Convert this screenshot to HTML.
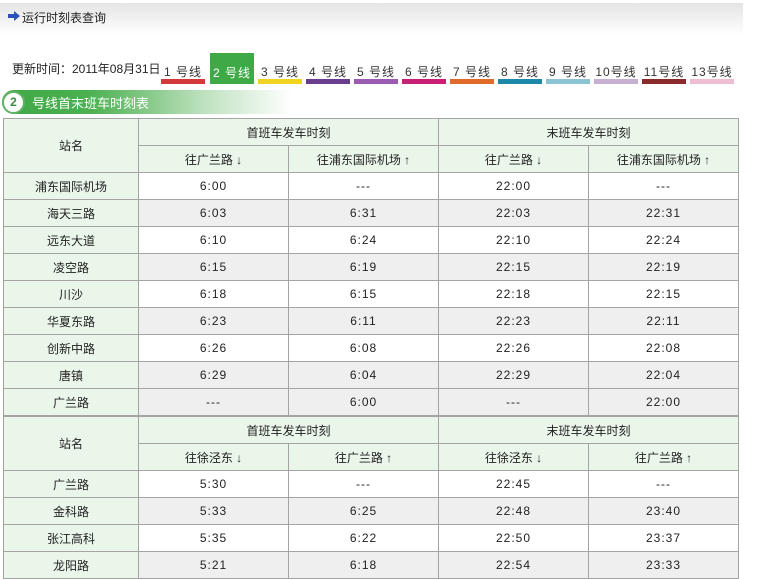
<!DOCTYPE html>
<html><head><meta charset="utf-8"><style>
*{margin:0;padding:0;box-sizing:border-box}
html,body{width:761px;height:580px;overflow:hidden}
body{background:#fff;font-family:"Liberation Sans","Noto Sans CJK SC",sans-serif;font-size:12px;color:#222;position:relative}
.top{position:absolute;left:0;top:3px;width:743px;height:32px;background:linear-gradient(#e4e4e4,#fff)}
.title{position:absolute;left:22px;top:9px;font-size:12px}
.arrow{position:absolute;left:8px;top:11px;width:12px;height:10px}
.upd{position:absolute;left:12px;top:60px;font-size:12px}
.tab{position:absolute;top:60px;width:44px;height:24px;text-align:center;font-size:12px;color:#333}
.tab span{display:block;padding-top:3px;letter-spacing:1px}
.tab i{position:absolute;left:0;bottom:0;width:44px;height:5px}
.banner{position:absolute;left:2px;top:90px;width:290px;height:24px;border-radius:12px 0 0 12px;background:linear-gradient(90deg,#3ea845 0,#4cb050 30%,#bfe2c0 70%,#fff 100%)}
.circ{position:absolute;left:2px;top:91px;width:23px;height:23px;border-radius:50%;background:#fff;border:2px solid #62b266;color:#3d8a3f;font-weight:bold;font-size:12px;text-align:center;line-height:19px}
.btxt{position:absolute;left:32px;top:93px;color:#fff;font-size:13px}
.g{position:absolute;left:3px;width:736px;display:grid;grid-template-columns:134px 149px 149px 149px 149px;grid-auto-rows:26px;gap:1px;padding:1px;background:#a4a4a4}
.g div{display:flex;align-items:center;justify-content:center;background:#fff;font-size:12px}
.g .h{background:#eaf6ea}
.g .s{background:#eaf6ea}
.g .gr{background:#efefef}
.r2{grid-row:span 2}.c2{grid-column:span 2}
.n{letter-spacing:1px}
</style></head><body>
<div class="top"></div>
<svg class="arrow" viewBox="0 0 12 10"><path d="M0 3h6V0l6 5-6 5V7H0z" fill="#2b4fb8"/></svg>
<div class="title">运行时刻表查询</div>
<div class="upd">更新时间：2011年08月31日</div>
<div class="tab" style="left:161px"><span>1 号线</span><i style="background:#d3383a"></i></div>
<div class="tab" style="left:210px;top:53px;height:31px;background:#3ea945;color:#fff"><span style="padding-top:11px">2 号线</span></div>
<div class="tab" style="left:258px"><span>3 号线</span><i style="background:#f2d420"></i></div>
<div class="tab" style="left:306px"><span>4 号线</span><i style="background:#6a3d8e"></i></div>
<div class="tab" style="left:354px"><span>5 号线</span><i style="background:#9b5bb0"></i></div>
<div class="tab" style="left:402px"><span>6 号线</span><i style="background:#c81e73"></i></div>
<div class="tab" style="left:450px"><span>7 号线</span><i style="background:#e06a2a"></i></div>
<div class="tab" style="left:498px"><span>8 号线</span><i style="background:#1e88a8"></i></div>
<div class="tab" style="left:546px"><span>9 号线</span><i style="background:#8cc4d4"></i></div>
<div class="tab" style="left:594px"><span>10号线</span><i style="background:#c6afd0"></i></div>
<div class="tab" style="left:642px"><span>11号线</span><i style="background:#8a2a2a"></i></div>
<div class="tab" style="left:690px"><span>13号线</span><i style="background:#efbdd4"></i></div>
<div class="banner"></div>
<div class="circ">2</div>
<div class="btxt">号线首末班车时刻表</div>

<div class="g" style="top:118px">
<div class="s r2">站名</div><div class="h c2">首班车发车时刻</div><div class="h c2">末班车发车时刻</div>
<div class="h">往广兰路 ↓</div><div class="h">往浦东国际机场 ↑</div><div class="h">往广兰路 ↓</div><div class="h">往浦东国际机场 ↑</div>
<div class="s">浦东国际机场</div><div class="n">6:00</div><div class="n">---</div><div class="n">22:00</div><div class="n">---</div>
<div class="s">海天三路</div><div class="n gr">6:03</div><div class="n gr">6:31</div><div class="n gr">22:03</div><div class="n gr">22:31</div>
<div class="s">远东大道</div><div class="n">6:10</div><div class="n">6:24</div><div class="n">22:10</div><div class="n">22:24</div>
<div class="s">凌空路</div><div class="n gr">6:15</div><div class="n gr">6:19</div><div class="n gr">22:15</div><div class="n gr">22:19</div>
<div class="s">川沙</div><div class="n">6:18</div><div class="n">6:15</div><div class="n">22:18</div><div class="n">22:15</div>
<div class="s">华夏东路</div><div class="n gr">6:23</div><div class="n gr">6:11</div><div class="n gr">22:23</div><div class="n gr">22:11</div>
<div class="s">创新中路</div><div class="n">6:26</div><div class="n">6:08</div><div class="n">22:26</div><div class="n">22:08</div>
<div class="s">唐镇</div><div class="n gr">6:29</div><div class="n gr">6:04</div><div class="n gr">22:29</div><div class="n gr">22:04</div>
<div class="s">广兰路</div><div class="n gr">---</div><div class="n gr">6:00</div><div class="n gr">---</div><div class="n gr">22:00</div>
</div>

<div class="g" style="top:416px">
<div class="s r2">站名</div><div class="h c2">首班车发车时刻</div><div class="h c2">末班车发车时刻</div>
<div class="h">往徐泾东 ↓</div><div class="h">往广兰路 ↑</div><div class="h">往徐泾东 ↓</div><div class="h">往广兰路 ↑</div>
<div class="s">广兰路</div><div class="n">5:30</div><div class="n">---</div><div class="n">22:45</div><div class="n">---</div>
<div class="s">金科路</div><div class="n gr">5:33</div><div class="n gr">6:25</div><div class="n gr">22:48</div><div class="n gr">23:40</div>
<div class="s">张江高科</div><div class="n">5:35</div><div class="n">6:22</div><div class="n">22:50</div><div class="n">23:37</div>
<div class="s">龙阳路</div><div class="n gr">5:21</div><div class="n gr">6:18</div><div class="n gr">22:54</div><div class="n gr">23:33</div>
</div>
</body></html>
